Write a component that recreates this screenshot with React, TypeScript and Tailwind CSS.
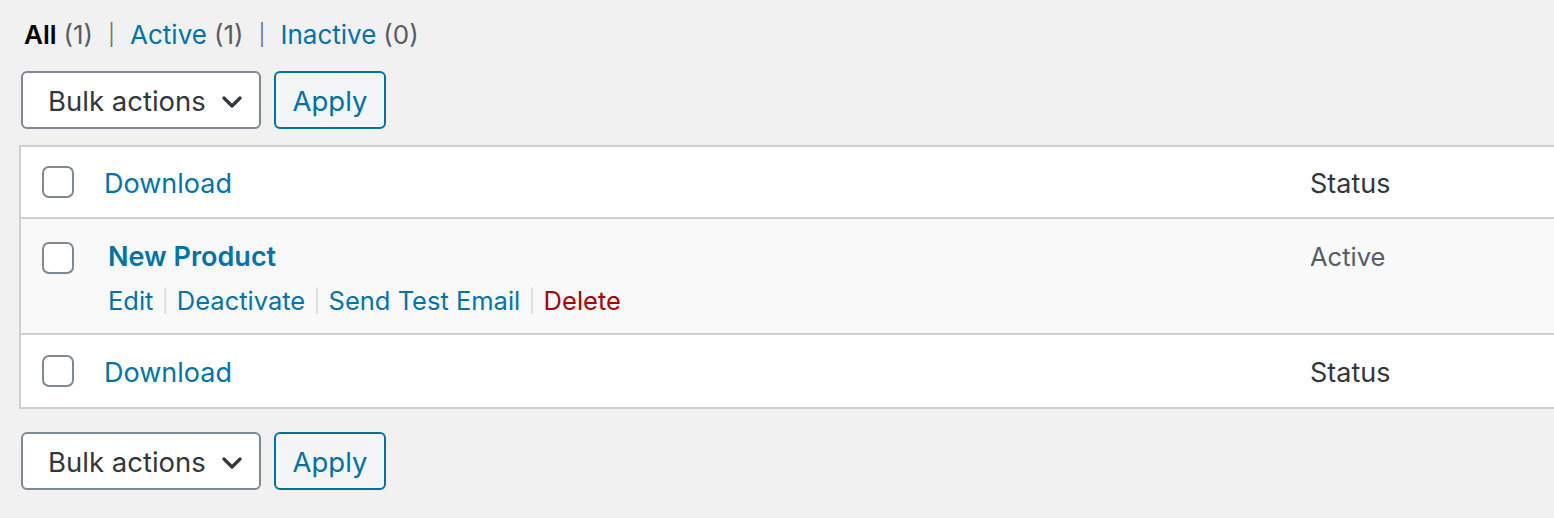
import { useState } from 'react';

const font = "font-['Inter','Liberation_Sans',sans-serif]";

function Chevron() {
  return (
    <svg width="20" height="12" viewBox="0 0 20 12" fill="none" className="ml-auto">
      <path d="M2 2l8 8 8-8" stroke="#32373c" strokeWidth="3.2" strokeLinecap="round" strokeLinejoin="round" />
    </svg>
  );
}

function BulkBar() {
  return (
    <div className="flex items-center gap-[13px] pl-[21px]">
      <div className="flex h-[58px] w-[240px] items-center rounded-[6px] border-2 border-[#7e8993] bg-white pl-[25px] pr-[17px] pt-[3px] text-[27.5px] text-[#32373c]">
        <span>Bulk actions</span>
        <Chevron />
      </div>
      <button className="h-[58px] w-[112px] rounded-[6px] border-2 border-[#0071a1] bg-[#f3f5f6] pt-[3px] text-[27.5px] text-[#0071a1]">
        Apply
      </button>
    </div>
  );
}

function Checkbox() {
  const [on, setOn] = useState(false);
  return (
    <button
      onClick={() => setOn(!on)}
      className="h-[32px] w-[32px] shrink-0 rounded-[7px] border-2 border-[#7e8993] bg-white"
    />
  );
}

function HeadRow({ last }: { last?: boolean }) {
  return (
    <div className={`flex h-[72px] items-center bg-white ${last ? '' : 'border-b-2 border-[#ccd0d4]'}`}>
      <div className="flex w-[83px] pl-[21px]">
        <Checkbox />
      </div>
      <a className="w-[1206px] pt-[4px] text-[27px] text-[#0073aa]">Download</a>
      <span className="pt-[4px] text-[27px] text-[#32373c]">Status</span>
    </div>
  );
}

function Sep() {
  return <span className="mx-[15px] text-[21px] text-[#72777c]">|</span>;
}

function ActSep() {
  return <span className="mx-[8px] text-[22px] text-[#dcdcde]">|</span>;
}

export default function App() {
  return (
    <div className={`h-[518px] w-[1554px] overflow-hidden bg-[#f1f1f1] ${font}`}>
      <div className="flex items-center pl-[24px] pt-[20px] text-[26px] leading-[30px]">
        <span className="font-semibold text-[#000]">All</span>
        <span className="ml-[7px] text-[#555d66]">(1)</span>
        <Sep />
        <a className="text-[#0073aa]">Active</a>
        <span className="ml-[7px] text-[#555d66]">(1)</span>
        <Sep />
        <a className="text-[#0073aa]">Inactive</a>
        <span className="ml-[7px] text-[#555d66]">(0)</span>
      </div>

      <div className="mt-[21px]">
        <BulkBar />
      </div>

      <div className="ml-[19px] mt-[16px] w-[1600px] border-2 border-[#ccd0d4]">
        <HeadRow />
        <div className="flex h-[116px] items-start border-b-2 border-[#ccd0d4] bg-[#f9f9f9] pt-[23px]">
          <div className="flex w-[87px] pl-[21px]">
            <Checkbox />
          </div>
          <div className="w-[1202px]">
            <a className="block text-[27px] font-semibold leading-[30px] text-[#0073aa]">New Product</a>
            <div className="mt-[14px] flex items-center text-[25.5px] leading-[30px]">
              <a className="text-[#0073aa]">Edit</a>
              <ActSep />
              <a className="text-[#0073aa]">Deactivate</a>
              <ActSep />
              <a className="text-[#0073aa]">Send Test Email</a>
              <ActSep />
              <a className="text-[#aa0000]">Delete</a>
            </div>
          </div>
          <span className="text-[25.5px] leading-[30px] text-[#555d66]">Active</span>
        </div>
        <HeadRow last />
      </div>

      <div className="mt-[23px]">
        <BulkBar />
      </div>
    </div>
  );
}
